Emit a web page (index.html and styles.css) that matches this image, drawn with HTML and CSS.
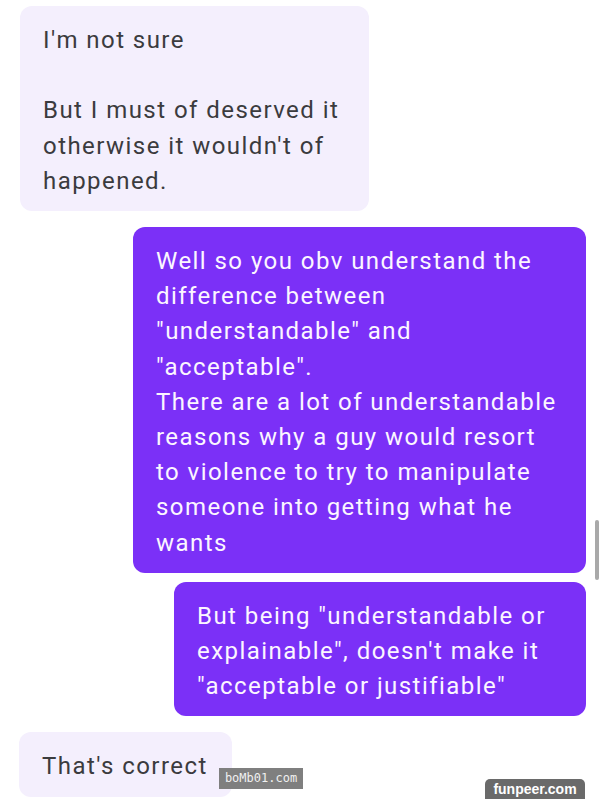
FILE: index.html
```html
<!DOCTYPE html>
<html>
<head>
<meta charset="utf-8">
<link rel="stylesheet" href="styles.css">
</head>
<body>
<div class="chat">
  <div class="msg in w1">I'm not sure<br><br>But I must of deserved it<br>otherwise it wouldn't of<br>happened.</div>
  <div class="msg out w2">Well so you obv understand the<br>difference between<br>"understandable" and<br>"acceptable".<br>There are a lot of understandable<br>reasons why a guy would resort<br>to violence to try to manipulate<br>someone into getting what he<br>wants</div>
  <div class="msg out w3 tight">But being "understandable or<br>explainable", doesn't make it<br>"acceptable or justifiable"</div>
  <div class="msg in w4">That's correct</div>
</div>
<div class="scrollbar"></div>
<div class="wm wm-bomb">boMb01.com</div>
<div class="wm wm-fun">funpeer.com</div>
</body>
</html>
```
FILE: styles.css
```css
html, body {
  margin: 0;
  padding: 0;
  background: #ffffff;
  width: 605px;
  height: 799px;
  overflow: hidden;
}
.chat {
  display: flex;
  flex-direction: column;
  gap: 16px;
  padding: 6px 19px 0 19px;
}
.msg {
  box-sizing: border-box;
  font-family: Roboto, "Noto Sans", sans-serif;
  font-size: 24px;
  letter-spacing: 1.45px;
  line-height: 35.2px;
  padding: 17px 22px 12px 23px;
  border-radius: 12px;
  white-space: nowrap;
}
.in {
  align-self: flex-start;
  background: #f4effd;
  color: #3b3b3e;
}
.out {
  align-self: flex-end;
  background: #7b30f7;
  color: #fbf6ff;
}
.tight { margin-top: -7px; }
.w1 { width: 349px; margin-left: 1px; }
.w2 { width: 453px; }
.w3 { width: 412px; }
.w4 { width: 213px; }
.scrollbar {
  position: absolute;
  left: 595px;
  top: 520px;
  width: 4px;
  height: 60px;
  border-radius: 2px;
  background: #a9a9a9;
}
.wm {
  position: absolute;
  color: #ffffff;
}
.wm-bomb {
  left: 219px;
  top: 768px;
  width: 84px;
  height: 21px;
  background: #7f7f7f;
  font-family: "DejaVu Sans Mono", monospace;
  font-size: 12px;
  line-height: 21px;
  text-align: center;
  color: #f0f0f0;
}
.wm-fun {
  left: 485px;
  top: 779px;
  width: 100px;
  height: 22px;
  background: #6a6a6a;
  border-radius: 5px 5px 0 0;
  font-family: "Liberation Sans", Arial, sans-serif;
  font-weight: bold;
  font-size: 14px;
  line-height: 21px;
  text-align: center;
}
```
